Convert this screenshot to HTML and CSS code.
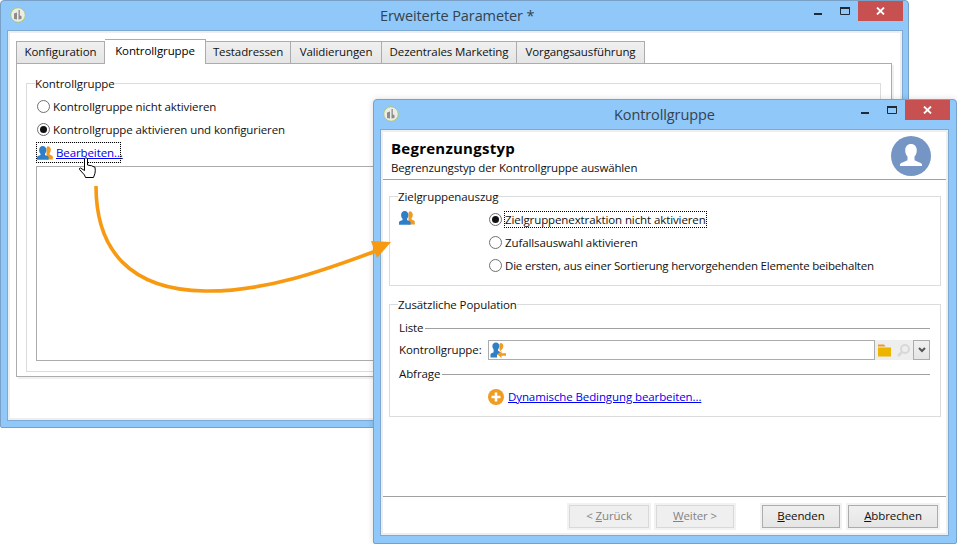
FILE: index.html
```html
<!DOCTYPE html>
<html lang="de">
<head>
<meta charset="utf-8">
<title>Erweiterte Parameter</title>
<link rel="stylesheet" href="styles.css">
</head>
<body>
<svg width="0" height="0" class="defs">
  <defs>
    <symbol id="people" viewBox="0 0 16 16">
      <path fill="#ee9c22" d="M10.500 1.200c2.100 0 3.300 1.500 3.300 3.600 0 1.500-.5 2.700-1.200 3.400v1.400c.9.500 2.400.9 3.200 1.700v3.300H9.500V5.200c0-1.600-.4-2.800 1-4z"/>
      <path fill="#2f7fc8" d="M5.700 1c2.300 0 3.700 1.700 3.700 4 0 1.600-.6 2.900-1.400 3.700v1.300c1.200.6 2.900 1 3.600 2v2.700H0V12c.7-1 2.400-1.400 3.500-2V8.700C2.700 7.900 2.100 6.600 2.100 5c0-2.300 1.300-4 3.600-4z"/>
    </symbol>
    <symbol id="logo" viewBox="0 0 16 16">
      <circle cx="8" cy="8" r="7.300" fill="#ecece8" stroke="#a9c77a"/>
      <path fill="#8c8c88" d="M4 6.500l3-1v7l-3-.5zM8.500 3h1.300v5.500l1.700.5v3l-3 .5z"/>
    </symbol>
    <symbol id="min" viewBox="0 0 8 2"><rect width="8" height="2" fill="#1f2a36"/></symbol>
    <symbol id="max" viewBox="0 0 10 8"><path fill="none" stroke="#1f2a36" d="M.5 1.500h9v6h-9z"/><rect width="10" height="2" fill="#1f2a36"/></symbol>
    <symbol id="x" viewBox="0 0 9 8"><path stroke="#fff" stroke-width="1.800" d="M1 .5l7 7M8 .5l-7 7"/></symbol>
  </defs>
</svg>

<section class="window window-back">
  <header class="titlebar">
    <svg class="logo"><use href="#logo"/></svg>
    <h1 class="wintitle wintitle-back">Erweiterte Parameter *</h1>
    <div class="controls">
      <svg class="ctl-min"><use href="#min"/></svg>
      <svg class="ctl-max"><use href="#max"/></svg>
      <span class="ctl-close"><svg class="ctl-x"><use href="#x"/></svg></span>
    </div>
  </header>
  <div class="client client-back">
    <nav class="tabs">
      <span class="tab tab-a">Konfiguration</span>
      <span class="tab tab-b active">Kontrollgruppe</span>
      <span class="tab tab-c">Testadressen</span>
      <span class="tab tab-d">Validierungen</span>
      <span class="tab tab-e">Dezentrales Marketing</span>
      <span class="tab tab-f">Vorgangsausführung</span>
    </nav>
    <div class="panel">
      <fieldset class="group group-main">
        <legend>Kontrollgruppe</legend>
        <div class="radio-row"><span class="radio"></span>Kontrollgruppe nicht aktivieren</div>
        <div class="radio-row"><span class="radio on"></span>Kontrollgruppe aktivieren und konfigurieren</div>
        <div class="edit-link">
          <svg class="people"><use href="#people"/></svg>
          <a class="link">Bearbeiten...</a>
        </div>
        <div class="listbox"></div>
      </fieldset>
    </div>
  </div>
</section>

<section class="window window-front">
  <header class="titlebar">
    <svg class="logo"><use href="#logo"/></svg>
    <h1 class="wintitle wintitle-front">Kontrollgruppe</h1>
    <div class="controls">
      <svg class="ctl-min"><use href="#min"/></svg>
      <svg class="ctl-max"><use href="#max"/></svg>
      <span class="ctl-close"><svg class="ctl-x"><use href="#x"/></svg></span>
    </div>
  </header>
  <div class="client client-front">
    <div class="wiz-head">
      <div class="wiz-text">
        <h2>Begrenzungstyp</h2>
        <p>Begrenzungstyp der Kontrollgruppe auswählen</p>
      </div>
      <svg class="avatar" viewBox="0 0 40 40">
        <circle cx="20" cy="20" r="20" fill="#7596c4"/>
        <path fill="#fff" d="M20 8c3.500 0 5.800 2.700 5.800 6.300 0 2.800-1 5-2.300 6.300v3.600c1.700 1.200 5.700 2 7.500 3.800V30H9v-2c1.800-1.800 5.800-2.600 7.500-3.800v-3.600c-1.300-1.300-2.300-3.500-2.300-6.300C14.200 10.700 16.500 8 20 8z"/>
      </svg>
    </div>
    <div class="wiz-body">
      <fieldset class="group group-target">
        <legend>Zielgruppenauszug</legend>
        <svg class="people people-target"><use href="#people"/></svg>
        <div class="target-options">
          <div class="radio-row"><span class="radio on"></span><span class="focus">Zielgruppenextraktion nicht aktivieren</span></div>
          <div class="radio-row"><span class="radio"></span>Zufallsauswahl aktivieren</div>
          <div class="radio-row"><span class="radio"></span><span class="tight">Die ersten, aus einer Sortierung hervorgehenden Elemente beibehalten</span></div>
        </div>
      </fieldset>
      <fieldset class="group group-pop">
        <legend>Zusätzliche Population</legend>
        <div class="sep-row"><span>Liste</span><i></i></div>
        <div class="field-row">
          <label>Kontrollgruppe:</label>
          <div class="input">
            <svg class="input-icon" viewBox="0 0 16 16">
              <path fill="#ee9c22" d="M10.500 1c1.800 0 2.800 1.300 2.800 3 0 1.300-.5 2.300-1 3l-1.800 2-1-1V2z"/>
              <path fill="#2f7fc8" d="M6 .5c2 0 3.300 1.500 3.300 3.500 0 1.400-.5 2.500-1.300 3.300v1.500c1 .5 2 .8 2.600 1.400L7 13v2.500H.5v-3.300c.6-1 2.300-1.400 3.100-2V7.300C2.900 6.500 2.400 5.400 2.400 4 2.400 2 4 .5 6 .5z"/>
              <path fill="#ee9c22" d="M7.500 12.500l4-3.500v2.300h4.500v2.500h-4.500V16z"/>
            </svg>
          </div>
          <span class="tool">
            <svg class="tool-icon" viewBox="0 0 13 12"><path fill="#eeb500" d="M0 3h13v9H0z"/><path fill="#ee9c22" d="M0 0h6l1.500 2H0z"/></svg>
          </span>
          <span class="tool">
            <svg class="tool-icon" viewBox="0 0 13 13"><circle cx="8" cy="5" r="4" fill="none" stroke="#d8d8d8" stroke-width="2"/><path stroke="#d8d8d8" stroke-width="2.500" d="M5 8l-4 4"/></svg>
          </span>
          <span class="drop">
            <svg class="drop-icon" viewBox="0 0 8 6"><path fill="none" stroke="#555" stroke-width="2" d="M1 1l3 3 3-3"/></svg>
          </span>
        </div>
        <div class="sep-row"><span>Abfrage</span><i></i></div>
        <div class="dyn-row">
          <svg class="plus" viewBox="0 0 16 16"><circle cx="8" cy="8" r="8" fill="#ee9c22"/><path stroke="#fff" stroke-width="2.600" d="M8 3.500v9M3.500 8h9"/></svg>
          <a class="link">Dynamische Bedingung bearbeiten...</a>
        </div>
      </fieldset>
    </div>
    <footer class="wiz-foot">
      <button class="btn btn-back" disabled>&lt; <u>Z</u>urück</button>
      <button class="btn btn-next" disabled><u>W</u>eiter &gt;</button>
      <button class="btn btn-finish"><u>B</u>eenden</button>
      <button class="btn btn-cancel"><u>A</u>bbrechen</button>
    </footer>
  </div>
</section>

<svg class="overlay" viewBox="0 0 957 544">
  <path fill="none" stroke="#f79a12" stroke-width="3.600" d="M96 186C96 250 130 290 205 291C265 292 325 270 376 251"/>
  <path fill="#f79a12" d="M391 242L377 258L371 241z"/>
  <path fill="#fff" stroke="#000" d="M84.500 158.500q1.500-1.500 3 0v6.500l2.500.5q2 0 3 1l2 .7q.5 3 0 6l-1.500 4.300H85.500l-1-2.500-5-5.500q-.5-1.500 1-1.500l4 2.500z"/>
</svg>
</body>
</html>
```
FILE: styles.css
```css
* { box-sizing: border-box; }
html, body { margin: 0; padding: 0; }
body {
  width: 957px;
  height: 544px;
  position: relative;
  overflow: hidden;
  background: #fff;
  font-family: "Open Sans", "Noto Sans", sans-serif;
  font-size: 11.5px;
  letter-spacing: -.1px;
  line-height: 16px;
  color: #111;
}
.defs { position: absolute; }

/* windows on the desktop */
.window {
  position: absolute;
  top: 0;
  display: flex;
  flex-direction: column;
  background: #8fc8f9;
  border: 1px solid #7aa0c6;
  border-radius: 4px 4px 2px 2px;
}
.window-back { left: 0; top: 0; width: 909px; height: 428px; }
.window-front {
  left: 373px;
  top: 99px;
  width: 584px;
  height: 445px;
  box-shadow: 0 0 6px rgba(0, 0, 0, .14);
}

.titlebar {
  height: 29px;
  flex: none;
  display: flex;
  align-items: flex-start;
  position: relative;
}
.logo { width: 16px; height: 16px; margin: 6px 0 0 9px; flex: none; }
.wintitle {
  position: absolute;
  top: 5px;
  margin: 0;
  font-size: 14.5px;
  letter-spacing: -.1px;
  line-height: 20px;
  font-weight: 400;
  color: #36424e;
  white-space: nowrap;
}
.wintitle-back { left: 379px; }
.wintitle-front { left: 240px; }

.controls {
  margin-left: auto;
  margin-right: 5px;
  display: flex;
  align-items: flex-start;
}
.window-front .controls { margin-right: 6px; }
.ctl-min { width: 8px; height: 2px; margin-top: 12px; }
.ctl-max { width: 10px; height: 8px; margin: 6px 0 0 18px; }
.ctl-close {
  width: 45px;
  height: 20px;
  margin-left: 8px;
  background: #c75050;
  display: flex;
  align-items: center;
  justify-content: center;
}
.ctl-x { width: 9px; height: 8px; }

.client {
  background: #fff;
  border: 1px solid #7ea9d3;
  box-shadow: inset 0 0 0 2px #eeeeee;
  flex: 1;
}
.client-back { margin: 0 5px 6px 6px; padding: 8px 10px 43px 8px; display: flex; flex-direction: column; }
.client-front { margin: 0 7px 7px 6px; display: flex; flex-direction: column; }

/* tabs */
.tabs { display: flex; align-items: flex-end; height: 24px; flex: none; position: relative; z-index: 1; }
.tab {
  height: 22px;
  padding-bottom: 2px;
  display: flex;
  align-items: center;
  justify-content: center;
  border: 1px solid #acacac;
  border-bottom: 0;
  border-left-width: 0;
  background: linear-gradient(#f0f0f0, #e5e5e5);
  white-space: nowrap;
}
.tab-a { width: 89px; border-left-width: 1px; }
.tab-b { width: 101px; }
.tab-c { width: 85px; }
.tab-d { width: 91px; }
.tab-e { width: 135px; }
.tab-f { width: 128px; }
.tab.active {
  height: 25px;
  margin-bottom: -1px;
  background: #fff;
  color: #000;
}
.panel {
  flex: 1;
  border: 1px solid #acacac;
  padding: 10px 10px 4px 9px;
  box-shadow: 2px 2px 0 #f0f0f0;
  background: #fff;
}

/* group boxes */
.group {
  margin: 0;
  min-width: 0;
  border: 1px solid #dcdcdc;
  padding: 0;
  background: #fff;
}
.group legend {
  margin-left: -1px;
  padding: 2px 0 0;
  line-height: 16px;
}
.group-main { height: 100%; padding: 3px 9px 10px 9px; display: flex; flex-direction: column; }

.radio-row { height: 23px; display: flex; align-items: center; white-space: nowrap; }
.group-main .radio-row { margin-left: 1px; }
.radio {
  width: 13px;
  height: 13px;
  margin-right: 3px;
  border: 1px solid #6f6f6f;
  border-radius: 50%;
  background: #fff;
  flex: none;
  display: flex;
  align-items: center;
  justify-content: center;
}
.radio.on::after { content: ""; width: 7px; height: 7px; border-radius: 50%; background: #111; }

.edit-link {
  width: 85px;
  height: 21px;
  margin: 1px 0 3px;
  display: flex;
  align-items: center;
  background: #fff;
  outline: 1px dotted #000;
  outline-offset: -1px;
  border: 1px solid #ffff30;
}
.people { width: 16px; height: 16px; flex: none; }
.edit-link .people { margin: 0 3px 0 0; }
.link { color: #0000f0; text-decoration: underline; white-space: nowrap; }
.listbox { flex: 1; border: 1px solid #acacac; background: #fff; }

/* wizard */
.wiz-head {
  height: 50px;
  flex: none;
  margin: 0 2px;
  padding: 0 15px 0 8px;
  display: flex;
  justify-content: space-between;
  align-items: flex-start;
  border-bottom: 1px solid #a0a0a0;
}
.wiz-head h2 { margin: 9px 0 0; font-size: 15px; letter-spacing: .25px; line-height: 18px; font-weight: 700; color: #000; }
.wiz-head p { margin: 3px 0 0; letter-spacing: -.14px; }
.avatar { width: 40px; height: 40px; margin-top: 6px; flex: none; }

.wiz-body { flex: 1; padding: 7px 7px 0 8px; display: flex; flex-direction: column; gap: 9px; }
.group-target { height: 99px; display: flex; padding: 0 9px; }
.people-target { margin-top: 5px; }
.target-options { margin: 3px 0 0 74px; }
.tight { letter-spacing: -.2px; }
.focus {
  height: 17px;
  margin-left: -1px;
  display: flex;
  align-items: center;
  outline: 1px dotted #000;
  outline-offset: -1px;
  padding: 0 1px;
}
.group-pop { height: 122px; padding: 7px 10px 0 9px; }

.sep-row { height: 16px; display: flex; align-items: center; }
.sep-row i { flex: 1; height: 1px; background: #a0a0a0; margin-left: 2px; }
.field-row { height: 20px; margin: 4px 0 6px; display: flex; align-items: stretch; }
.field-row label { width: 89px; line-height: 20px; white-space: nowrap; flex: none; }
.input { flex: 1; border: 1px solid #acacac; display: flex; align-items: center; padding-left: 1px; }
.input-icon { width: 16px; height: 16px; }
.tool { width: 19px; background: #eeeeee; display: flex; align-items: center; justify-content: center; flex: none; }
.tool-icon { width: 13px; height: 13px; }
.drop {
  width: 17px;
  border: 1px solid #acacac;
  background: linear-gradient(#f0f0f0, #e5e5e5);
  display: flex;
  align-items: center;
  justify-content: center;
  flex: none;
}
.drop-icon { width: 8px; height: 6px; }
.dyn-row { display: flex; align-items: center; gap: 4px; margin: 6px 0 0 89px; height: 18px; }
.plus { width: 16px; height: 16px; flex: none; }

.wiz-foot {
  height: 39px;
  flex: none;
  margin: 0 2px;
  border-top: 1px solid #a0a0a0;
  padding: 8px 8px 0 186px;
  display: flex;
  align-items: flex-start;
}
.btn {
  height: 23px;
  padding: 0 0 2px;
  font: inherit;
  letter-spacing: inherit;
  color: #111;
  border: 1px solid #acacac;
  background: linear-gradient(#f0f0f0, #e5e5e5);
  outline: 2px solid #f2f2f2;
}
.btn[disabled] { color: #838383; background: #efefef; border-color: #d9d9d9; }
.btn-back { width: 80px; }
.btn-next { width: 78px; margin-left: 7px; }
.btn-finish { width: 78px; margin-left: 28px; }
.btn-cancel { width: 90px; margin-left: 8px; }

.overlay { position: absolute; left: 0; top: 0; width: 957px; height: 544px; pointer-events: none; }
```
